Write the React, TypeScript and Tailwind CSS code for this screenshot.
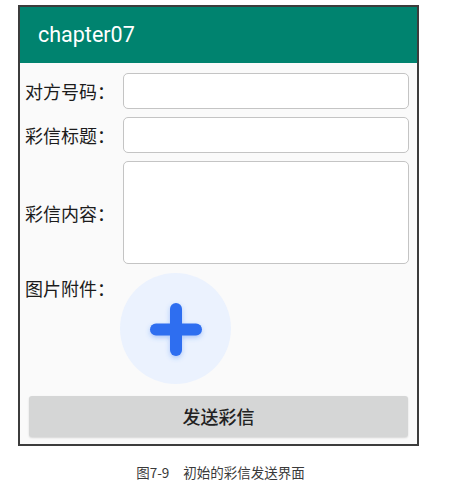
import React from 'react';

const cjk = { fontFamily: '"Noto Sans CJK SC", "Noto Sans", sans-serif' };

const Field: React.FC<{ label: string; tall?: boolean; className?: string }> = ({ label, tall, className }) => (
  <div className={`flex items-center ${className ?? ''}`}>
    <span className="w-[98px] shrink-0 text-[18px] leading-6 text-[#1c1c1c]" style={cjk}>
      {label}
    </span>
    {tall ? (
      <textarea className="flex-1 h-[103px] rounded-[5px] border border-[#c4c4c4] bg-white resize-none outline-none" />
    ) : (
      <input className="flex-1 h-[36px] rounded-[5px] border border-[#c4c4c4] bg-white outline-none" />
    )}
  </div>
);

export default function App() {
  return (
    <div className="w-[471px] h-[498px] bg-white">
      <div className="ml-[18px] pt-[5px]">
        <div className="w-[401px] h-[441px] border-2 border-[#3c3c3c] bg-[#fafafa] flex flex-col">
          {/* app bar */}
          <div className="h-[56px] bg-[#00836f] flex items-center pl-[18px]">
            <span className="text-white text-[21.5px]" style={{ fontFamily: 'Roboto, sans-serif' }}>
              chapter07
            </span>
          </div>

          <div className="flex flex-col pl-[5px] pr-[8px]">
            <Field label="对方号码：" className="mt-[10px]" />
            <Field label="彩信标题：" className="mt-[8px]" />
            <Field label="彩信内容：" tall className="mt-[8px]" />

            {/* attachment */}
            <div className="flex mt-[9px]">
              <span className="w-[95px] shrink-0 pt-[3px] text-[18px] leading-6 text-[#1c1c1c]" style={cjk}>
                图片附件：
              </span>
              <div className="w-[111px] h-[111px] rounded-full bg-[#ebf2fe] flex items-center justify-center">
                <svg width="70" height="70" viewBox="0 0 70 70">
                  <defs>
                    <filter id="glow" x="-30%" y="-30%" width="160%" height="160%">
                      <feGaussianBlur in="SourceAlpha" stdDeviation="2.5" />
                      <feOffset dy="2" result="b" />
                      <feFlood floodColor="#2f6ff0" floodOpacity="0.35" />
                      <feComposite in2="b" operator="in" />
                      <feMerge>
                        <feMergeNode />
                        <feMergeNode in="SourceGraphic" />
                      </feMerge>
                    </filter>
                  </defs>
                  <g filter="url(#glow)" stroke="#2e6ef0" strokeWidth="12" strokeLinecap="round">
                    <line x1="35" y1="15" x2="35" y2="56" />
                    <line x1="15" y1="35.5" x2="55" y2="35.5" />
                  </g>
                </svg>
              </div>
            </div>
          </div>

          <button
            className="mt-[12px] mx-[9px] h-[41px] rounded-[3px] bg-[#d5d6d6] text-[18px] font-medium text-[#222] shadow-[0_1px_2px_rgba(0,0,0,0.15)]"
            style={cjk}
          >
            发送彩信
          </button>
        </div>
      </div>

      <div className="mt-[16px] text-center text-[13.5px] text-[#3a3a3a] pr-[30px]" style={cjk}>
        图7-9<span className="inline-block w-[14px]" />初始的彩信发送界面
      </div>
    </div>
  );
}
